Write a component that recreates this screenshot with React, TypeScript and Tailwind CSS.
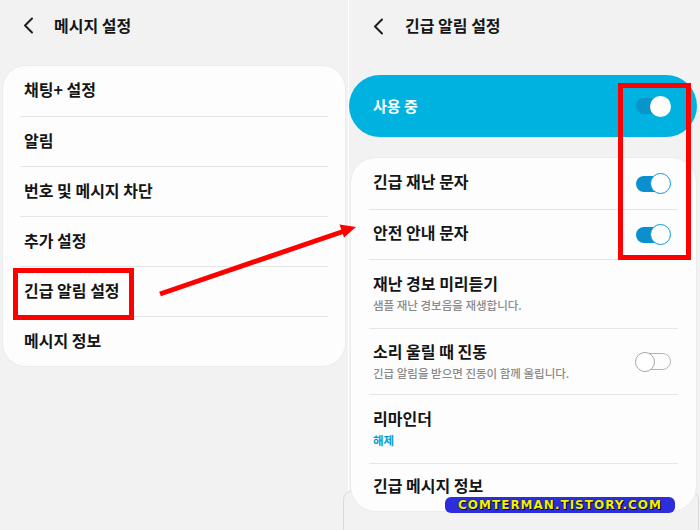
import React from "react";

const font = "font-['Noto_Sans_CJK_KR','Noto_Sans',sans-serif]";

const menuItems = ["채팅+ 설정", "알림", "번호 및 메시지 차단", "추가 설정", "긴급 알림 설정", "메시지 정보"];

type Row = {
  title: string;
  sub?: string;
  subBlue?: boolean;
  toggle?: "on" | "off";
  h: string;
};

const alertRows: Row[] = [
  { title: "긴급 재난 문자", toggle: "on", h: "h-[51px]" },
  { title: "안전 안내 문자", toggle: "on", h: "h-[50px]" },
  { title: "재난 경보 미리듣기", sub: "샘플 재난 경보음을 재생합니다.", h: "h-[69px]" },
  { title: "소리 울릴 때 진동", sub: "긴급 알림을 받으면 진동이 함께 울립니다.", toggle: "off", h: "h-[66px]" },
  { title: "리마인더", sub: "해제", subBlue: true, h: "h-[69px]" },
  { title: "긴급 메시지 정보", h: "h-[48px]" },
];

function Chevron() {
  return (
    <svg width="11" height="17" viewBox="0 0 11 17" fill="none" stroke="#1e1e1e" strokeWidth="2" strokeLinecap="round" strokeLinejoin="round">
      <polyline points="9,1.5 2,8.5 9,15.5" />
    </svg>
  );
}

function Toggle({ state, hero }: { state: "on" | "off"; hero?: boolean }) {
  if (state === "off") {
    return (
      <div className="relative w-[36px] h-[20px] flex items-center justify-end">
        <div className="h-[17px] w-[32px] rounded-full border-[1.5px] border-[#b4b4b4]" />
        <div className="absolute left-0 top-0 h-[20px] w-[20px] rounded-full bg-white border-[1.5px] border-[#a8a8a8]" />
      </div>
    );
  }
  return (
    <div className="relative w-[35px] h-[21px] flex items-center">
      <div className={`h-[16px] w-[31px] rounded-full ${hero ? "bg-[#0895c9]" : "bg-[#0b8fcf]"}`} />
      <div
        className={`absolute right-0 top-0 h-[21px] w-[21px] rounded-full bg-white ${
          hero ? "" : "border-[1.5px] border-[#0b9ad8]"
        }`}
      />
    </div>
  );
}

export default function App() {
  return (
    <div className={`relative w-[700px] h-[530px] overflow-hidden bg-[#f2f2f2] flex ${font} text-[#151515]`}>
      {/* left: 메시지 설정 */}
      <div className="w-[348px] flex flex-col">
        <div className="h-[51px] flex items-center pl-[23px] gap-[20px]">
          <Chevron />
          <span className="text-[16px] font-semibold pb-[2px]">메시지 설정</span>
        </div>
        <div className="mt-[14px] mx-[2px] rounded-[24px] bg-[#fdfdfd] border border-[#ececec] flex flex-col overflow-hidden">
          {menuItems.map((item, i) => (
            <div key={item} className="h-[50px] px-[17px] flex">
              <div
                className={`flex-1 flex items-center pl-[4px] pb-[4px] text-[16px] font-semibold ${
                  i > 0 ? "border-t border-[#e6e6e6]" : ""
                }`}
              >
                {item}
              </div>
            </div>
          ))}
        </div>
      </div>

      <div className="w-px bg-white" />

      {/* right: 긴급 알림 설정 */}
      <div className="flex-1 flex flex-col relative z-10">
        <div className="h-[52px] flex items-center pl-[24px] gap-[21px]">
          <Chevron />
          <span className="text-[16px] font-semibold pb-[2px]">긴급 알림 설정</span>
        </div>
        <div className="mt-[23px] mr-[3px] h-[62px] rounded-full bg-[#00b2e0] flex items-center justify-between pl-[24px] pr-[26px]">
          <span className="text-[15px] font-semibold text-white">사용 중</span>
          <Toggle state="on" hero />
        </div>
        <div className="mt-[20px] ml-[1px] mr-[3px] rounded-[26px] bg-[#fdfdfd] border border-[#ececec] flex flex-col">
          {alertRows.map((row, i) => (
            <div key={row.title} className={`${row.h} px-[18px] flex`}>
              <div
                className={`flex-1 flex items-center justify-between pl-[4px] pr-[7px] ${
                  i > 0 ? "border-t border-[#e6e6e6]" : ""
                }`}
              >
                <div className={`flex flex-col gap-[4px] ${row.sub ? "pb-[2px]" : "pb-[5px]"}`}>
                  <span className="text-[16px] leading-[20px] font-semibold">{row.title}</span>
                  {row.sub && (
                    <span
                      className={`text-[11.5px] leading-[16px] ${
                        row.subBlue ? "text-[#0a9bd3] font-bold" : "text-[#8a8a8a] font-medium"
                      }`}
                    >
                      {row.sub}
                    </span>
                  )}
                </div>
                {row.toggle && <Toggle state={row.toggle} />}
              </div>
            </div>
          ))}
        </div>
      </div>

      {/* phone frame edge peeking at the bottom */}
      <div className="absolute left-[343px] top-[490px] w-[356px] h-[60px] rounded-t-[10px] border border-[#dadada] bg-[#f2f2f2]" />

      {/* red annotation boxes */}
      <div className="absolute left-[13px] top-[268px] w-[121px] h-[52px] border-[5px] border-[#ff0000] z-20" />
      <div className="absolute left-[618px] top-[83px] w-[73px] h-[177px] border-[5px] border-[#ff0000] z-20" />

      {/* red arrow */}
      <svg className="absolute left-0 top-0 z-20 pointer-events-none" width="700" height="530" viewBox="0 0 700 530">
        <line x1="160" y1="294" x2="343" y2="231.5" stroke="#ff0000" strokeWidth="5" />
        <polygon points="356,227 344,237.5 339.5,224.5" fill="#ff0000" />
      </svg>

      {/* watermark */}
      <div className="absolute left-[445px] top-[497px] w-[230px] h-[16px] rounded-[6px] bg-[#2d2dde] z-30 flex items-center justify-center">
        <span className="font-['DejaVu_Sans',sans-serif] font-bold text-[12px] leading-none tracking-[1px] text-[#f2f200] [text-shadow:0_0_1px_#000,1px_1px_0_#000]">
          COMTERMAN.TISTORY.COM
        </span>
      </div>
    </div>
  );
}
